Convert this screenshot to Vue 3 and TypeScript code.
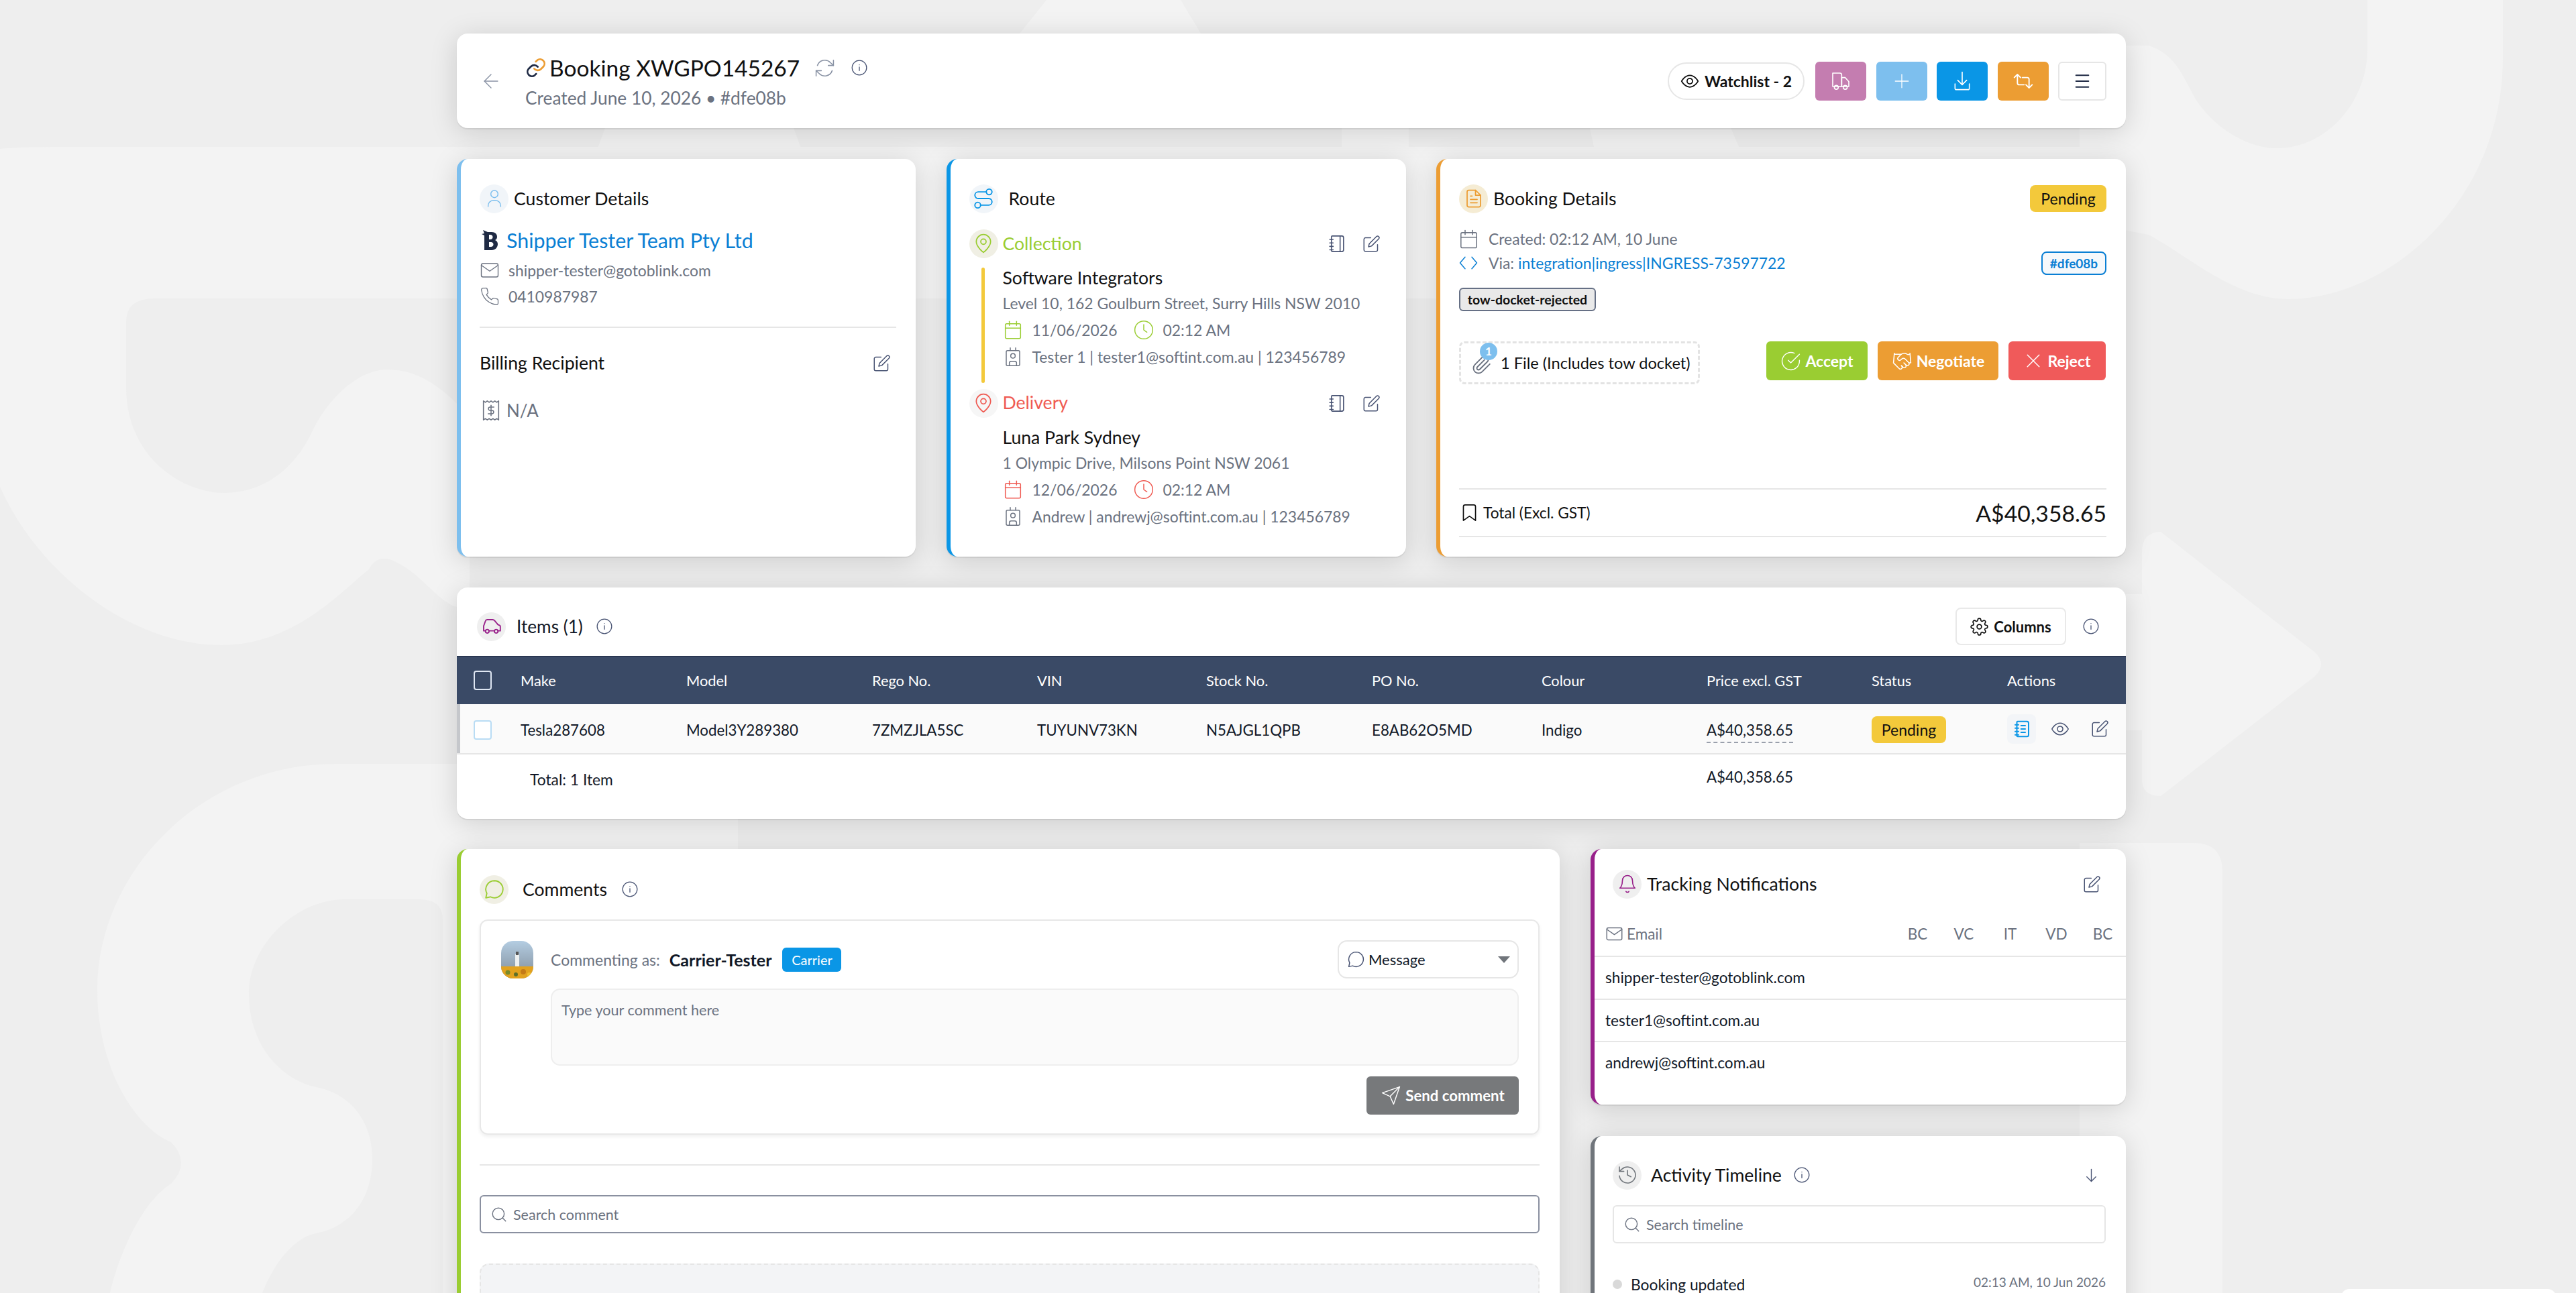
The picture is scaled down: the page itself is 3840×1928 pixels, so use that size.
<script setup lang="ts">
import { h } from 'vue'

const circle = (cx: number, cy: number, r: number) =>
  `M${cx - r} ${cy}a${r} ${r} 0 1 0 ${2 * r} 0a${r} ${r} 0 1 0 ${-2 * r} 0`

const notebookShape = ['M7 3h11a2 2 0 0 1 2 2v14a2 2 0 0 1-2 2H7a1 1 0 0 1-1-1V4a1 1 0 0 1 1-1z', 'M4 7h4', 'M4 11h4', 'M4 15h4', 'M4 19h4']

const icons: Record<string, string[]> = {
  back: ['M19 12H5', 'M12 19l-7-7 7-7'],
  refresh: ['M22 3v6h-6', 'M2 21v-6h6', 'M3.5 9a9 9 0 0 1 14.9-3.4L22 9', 'M2 15l3.6 3.4A9 9 0 0 0 20.5 15'],
  info: [circle(12, 12, 10), 'M12 16v-5', 'M12 8h.01'],
  eye: ['M1.5 12S5.5 4.5 12 4.5 22.5 12 22.5 12 18.5 19.5 12 19.5 1.5 12 1.5 12z', circle(12, 12, 3.5)],
  truck: ['M3 3h8a2 2 0 0 1 2 2v13H3z', 'M13 8h4l4 4.5V18h-8z', circle(7, 19, 2.2), circle(17, 19, 2.2)],
  plus: ['M12 3v18', 'M3 12h18'],
  download: ['M12 2v14', 'M7 11l5 5 5-5', 'M4 15v5a1.5 1.5 0 0 0 1.5 1.5h13A1.5 1.5 0 0 0 20 20v-5'],
  repeat: ['M2 8l3.5-3.5L9 8', 'M5.5 5v9a2 2 0 0 0 2 2H13', 'M22 16l-3.5 3.5L15 16', 'M18.5 19v-9a2 2 0 0 0-2-2H11'],
  menu: ['M5 5.5h14', 'M5 12h14', 'M5 18.5h14'],
  user: [circle(12, 7, 4), 'M5 21v-1a6 6 0 0 1 6-6h2a6 6 0 0 1 6 6v1'],
  route: ['M9 19h8.5a3.5 3.5 0 0 0 0-7h-11a3.5 3.5 0 0 1 0-7H15', circle(18, 5, 3), circle(6, 19, 3)],
  pin: ['M20 10c0 6-8 12-8 12s-8-6-8-12a8 8 0 0 1 16 0z', circle(12, 10, 3)],
  calendar: ['M5 5h14a1.5 1.5 0 0 1 1.5 1.5V20a1.5 1.5 0 0 1-1.5 1.5H5A1.5 1.5 0 0 1 3.5 20V6.5A1.5 1.5 0 0 1 5 5z', 'M8 2.5V7', 'M16 2.5V7', 'M3.5 10h17'],
  clock: [circle(12, 12, 10), 'M12 6v6l3.5 2.5'],
  contact: ['M6 5h12a1.5 1.5 0 0 1 1.5 1.5v14A1.5 1.5 0 0 1 18 22H6a1.5 1.5 0 0 1-1.5-1.5v-14A1.5 1.5 0 0 1 6 5z', 'M9 2v3', 'M15 2v3', circle(12, 11, 2.5), 'M8 22v-3a2 2 0 0 1 2-2h4a2 2 0 0 1 2 2v3'],
  notebook: [...notebookShape, 'M16 3v18'],
  notelines: [...notebookShape, 'M11 8h5', 'M11 12h5', 'M11 16h5'],
  edit: ['M11 4H4a2 2 0 0 0-2 2v14a2 2 0 0 0 2 2h14a2 2 0 0 0 2-2v-7', 'M18.5 2.5a2.12 2.12 0 0 1 3 3L12 15l-4 1 1-4 9.5-9.5z'],
  doc: ['M14 2H6a2 2 0 0 0-2 2v16a2 2 0 0 0 2 2h12a2 2 0 0 0 2-2V8z', 'M14 2v6h6', 'M8 13h8', 'M8 17h8', 'M8 9h2'],
  code: ['M8 5l-6 7 6 7', 'M16 5l6 7-6 7'],
  mail: ['M4 4h16a2 2 0 0 1 2 2v12a2 2 0 0 1-2 2H4a2 2 0 0 1-2-2V6a2 2 0 0 1 2-2z', 'M22 6l-10 7L2 6'],
  phone: ['M22 16.92v3a2 2 0 0 1-2.18 2 19.79 19.79 0 0 1-8.63-3.07 19.5 19.5 0 0 1-6-6 19.79 19.79 0 0 1-3.07-8.67A2 2 0 0 1 4.11 2h3a2 2 0 0 1 2 1.72 12.84 12.84 0 0 0 .7 2.81 2 2 0 0 1-.45 2.11L8.09 9.91a16 16 0 0 0 6 6l1.27-1.27a2 2 0 0 1 2.11-.45 12.84 12.84 0 0 0 2.81.7A2 2 0 0 1 22 16.92z'],
  receipt: ['M4 2v20l2-1.5 2 1.5 2-1.5 2 1.5 2-1.5 2 1.5 2-1.5 2 1.5V2l-2 1.5L16 2l-2 1.5L12 2l-2 1.5L8 2 6 3.5z', 'M15 8.5h-4a1.75 1.75 0 0 0 0 3.5h2a1.75 1.75 0 0 1 0 3.5H9', 'M12 6.5v11'],
  clip: ['M21.44 11.05l-9.19 9.19a6 6 0 0 1-8.49-8.49l9.19-9.19a4 4 0 0 1 5.66 5.66l-9.2 9.19a2 2 0 0 1-2.83-2.83l8.49-8.48'],
  check: ['M22 11.08V12a10 10 0 1 1-5.93-9.14', 'M22 4L12 14.01l-3-3'],
  handshake: ['M11 17l2 2a1 1 0 1 0 3-3', 'M14 14l2.5 2.5a1 1 0 1 0 3-3l-3.88-3.88a3 3 0 0 0-4.24 0l-.88.88a1 1 0 1 1-3-3l2.81-2.81a5.79 5.79 0 0 1 7.06-.87l.47.28a2 2 0 0 0 1.42.25L21 4', 'M21 3l1 11h-2', 'M3 3L2 14l6.5 6.5a1 1 0 1 0 3-3', 'M3 4h8'],
  x: ['M19 5L5 19', 'M5 5l14 14'],
  bookmark: ['M19 21l-7-5-7 5V5a2 2 0 0 1 2-2h10a2 2 0 0 1 2 2z'],
  car: ['M5 17H3v-5.5l2-5.5a2 2 0 0 1 1.9-1.5h6a3 3 0 0 1 2.3 1L19 10l2 1a1 1 0 0 1 .6 1v5H19', 'M9 17h6', circle(7, 17.5, 2), circle(17, 17.5, 2)],
  gear: ['M12 15a3 3 0 1 0 0-6 3 3 0 0 0 0 6z', 'M19.4 15a1.65 1.65 0 0 0 .33 1.82l.06.06a2 2 0 0 1 0 2.83 2 2 0 0 1-2.83 0l-.06-.06a1.65 1.65 0 0 0-1.82-.33 1.65 1.65 0 0 0-1 1.51V21a2 2 0 0 1-2 2 2 2 0 0 1-2-2v-.09A1.65 1.65 0 0 0 9 19.4a1.65 1.65 0 0 0-1.82.33l-.06.06a2 2 0 0 1-2.83 0 2 2 0 0 1 0-2.83l.06-.06a1.65 1.65 0 0 0 .33-1.82 1.65 1.65 0 0 0-1.51-1H3a2 2 0 0 1-2-2 2 2 0 0 1 2-2h.09A1.65 1.65 0 0 0 4.6 9a1.65 1.65 0 0 0-.33-1.82l-.06-.06a2 2 0 0 1 0-2.83 2 2 0 0 1 2.83 0l.06.06a1.65 1.65 0 0 0 1.82.33H9a1.65 1.65 0 0 0 1-1.51V3a2 2 0 0 1 2-2 2 2 0 0 1 2 2v.09a1.65 1.65 0 0 0 1 1.51 1.65 1.65 0 0 0 1.82-.33l.06-.06a2 2 0 0 1 2.83 0 2 2 0 0 1 0 2.83l-.06.06a1.65 1.65 0 0 0-.33 1.82V9a1.65 1.65 0 0 0 1.51 1H21a2 2 0 0 1 2 2 2 2 0 0 1-2 2h-.09a1.65 1.65 0 0 0-1.51 1z'],
  message: ['M12 3a9 9 0 1 1-4.2 16.96L3 21l1.04-4.8A9 9 0 0 1 12 3z'],
  send: ['M22 2L11 13', 'M22 2l-7 20-4-9-9-4z'],
  search: [circle(11, 11, 8), 'M21 21l-4.35-4.35'],
  bell: ['M18 8a6 6 0 0 0-12 0c0 7-3 9-3 9h18s-3-2-3-9', 'M13.73 21a2 2 0 0 1-3.46 0'],
  history: ['M3 3v5h5', 'M3.05 13A9 9 0 1 0 6 5.3L3 8', 'M12 7v5l4 2'],
  down: ['M12 4v16', 'M18 14l-6 6-6-6']
}

// small icon helper, all strokes follow currentColor
const Icon = (props: { name: string; size?: number; stroke?: number }) =>
  h(
    'svg',
    {
      class: 'ico',
      width: props.size ?? 26,
      height: props.size ?? 26,
      viewBox: '0 0 24 24',
      fill: 'none',
      stroke: 'currentColor',
      'stroke-width': props.stroke ?? 1.2,
      'stroke-linecap': 'round',
      'stroke-linejoin': 'round'
    },
    (icons[props.name] ?? []).map((d) => h('path', { d }))
  )
Icon.props = ['name', 'size', 'stroke']

interface Stop {
  kind: string
  label: string
  name: string
  address: string
  date: string
  time: string
  contact: string
  bar: boolean
}

const stops: Stop[] = [
  {
    kind: 'collection',
    label: 'Collection',
    name: 'Software Integrators',
    address: 'Level 10, 162 Goulburn Street, Surry Hills NSW 2010',
    date: '11/06/2026',
    time: '02:12 AM',
    contact: 'Tester 1 | tester1@softint.com.au | 123456789',
    bar: true
  },
  {
    kind: 'delivery',
    label: 'Delivery',
    name: 'Luna Park Sydney',
    address: '1 Olympic Drive, Milsons Point NSW 2061',
    date: '12/06/2026',
    time: '02:12 AM',
    contact: 'Andrew | andrewj@softint.com.au | 123456789',
    bar: false
  }
]

const columns = ['Make', 'Model', 'Rego No.', 'VIN', 'Stock No.', 'PO No.', 'Colour', 'Price excl. GST', 'Status', 'Actions']
const itemCells = ['Tesla287608', 'Model3Y289380', '7ZMZJLA5SC', 'TUYUNV73KN', 'N5AJGL1QPB', 'E8AB62O5MD', 'Indigo']
const notifyCols = ['BC', 'VC', 'IT', 'VD', 'BC']
const notifyEmails = ['shipper-tester@gotoblink.com', 'tester1@softint.com.au', 'andrewj@softint.com.au']
</script>

<template>
  <div class="page">
    <svg class="watermark" width="3840" height="1928" viewBox="0 0 3840 1928" aria-hidden="true">
      <path d="M0 222Q30 219 80 219H3100V445H230Q188 445 188 480V578C188 680 270 735 334 735C400 735 445 690 467 640C495 585 540 551 577 551C630 551 665 585 700 620V910L678 904C650 895 625 850 581 834C565 830 555 838 550 849C510 880 440 962 330 962C200 962 60 860 0 726Z" />
      <path d="M3731 0V86C3731 300 3560 446 3411 446C3330 446 3260 380 3203 350L3100 330V68H3203C3240 80 3250 105 3273 148C3300 190 3350 221 3394 221C3470 221 3529 150 3529 74V0Z" />
      <path d="M3100 886H3193V824Q3193 793 3221 793L3450 972Q3470 990 3450 1009L3221 1187Q3193 1187 3193 1162V1089H3100Z" />
      <path d="M3100 1257H3270Q3313 1257 3313 1300V1928H3100Z" />
      <path d="M700 1139H500C300 1139 145 1300 145 1476C145 1590 200 1680 255 1703Q285 1734 255 1765C215 1790 180 1860 164 1928H391C410 1880 440 1845 471 1839C520 1830 555 1790 555 1728C555 1670 520 1630 471 1621C420 1610 371 1560 371 1482C371 1410 440 1341 515 1341H625Q660 1341 660 1371V1928H1100V1139Z" />
      <path d="M902 191H1183L1200 237H885Z" />
      <path d="M1560 0H1760L1790 50H1520Z" />
      <path d="M2000 191H2100V237H2000Z" />
      <path d="M2370 191H2580L2600 237H2380Z" />
    </svg>

    <div class="toast-edge"></div>

    <main class="content">
      <!-- page header -->
      <header class="card top-card">
        <button class="ghost back" type="button"><Icon name="back" :size="34" :stroke="1" /></button>
        <div class="top-info">
          <div class="top-title">
            <svg class="link-mark" width="32" height="32" viewBox="0 0 24 24" fill="none" stroke-width="2" stroke-linecap="round">
              <path stroke="#ec9d33" d="M10 13a5 5 0 0 0 7.5.5l3-3a5 5 0 0 0-7-7L11.7 5.2" />
              <path stroke="#1f2a44" d="M14 11a5 5 0 0 0-7.5-.5l-3 3a5 5 0 0 0 7 7l1.7-1.7" />
            </svg>
            <h1>Booking XWGPO145267</h1>
            <Icon class="refresh" name="refresh" :size="31" :stroke="1.2" />
            <Icon class="info-ico" name="info" :size="26" />
          </div>
          <p class="top-sub">Created June 10, 2026 • #dfe08b</p>
        </div>
        <div class="top-actions">
          <button class="watch" type="button"><Icon name="eye" :size="28" :stroke="1.5" />Watchlist - 2</button>
          <button class="square purple" type="button"><Icon name="truck" :size="32" :stroke="1.2" /></button>
          <button class="square sky" type="button"><Icon name="plus" :size="26" :stroke="1.2" /></button>
          <button class="square blue" type="button"><Icon name="download" :size="32" :stroke="1.2" /></button>
          <button class="square orange" type="button"><Icon name="repeat" :size="32" :stroke="1.4" /></button>
          <button class="square plain" type="button"><Icon name="menu" :size="32" :stroke="1.5" /></button>
        </div>
      </header>

      <section class="details-row">
        <!-- customer -->
        <article class="card side sky-side customer">
          <div class="card-head">
            <span class="badge-ico sky-ico"><Icon name="user" :size="32" :stroke="1.1" /></span>
            <h2 class="head-tight">Customer Details</h2>
          </div>
          <div class="company">
            <svg width="24" height="30" viewBox="0 0 24 30"><path fill="#1f2a44" d="M2 0l7 3H15c5 0 8 3 8 7 0 2.5-1 4-3 5 2.5 1 4 3 4 6 0 5-4 9-9 9H4V8L0 6l4-1zM11 7v7h2c2 0 3.5-1.5 3.5-3.5S15 7 13 7zM11 18v7h3c2 0 3.5-1.5 3.5-3.5S16 18 14 18z" /></svg>
            <a class="company-link">Shipper Tester Team Pty Ltd</a>
          </div>
          <div class="meta meta-mail"><Icon name="mail" :size="30" :stroke="1.1" />shipper-tester@gotoblink.com</div>
          <div class="meta meta-phone"><Icon name="phone" :size="30" :stroke="1" />0410987987</div>
          <hr class="rule" />
          <div class="billing">
            <h3>Billing Recipient</h3>
            <Icon class="edit-ico" name="edit" :size="27" :stroke="1.3" />
          </div>
          <div class="billing-value"><Icon name="receipt" :size="34" :stroke="1.1" />N/A</div>
        </article>

        <!-- route -->
        <article class="card side blue-side route">
          <div class="card-head">
            <span class="badge-ico sky-ico blue-ink"><Icon name="route" :size="34" :stroke="1.3" /></span>
            <h2 class="head-route">Route</h2>
          </div>
          <div v-for="stop in stops" :key="stop.kind" :class="['stop', stop.kind]">
            <div class="stop-head">
              <span class="stop-pin"><Icon name="pin" :size="32" :stroke="1.3" /></span>
              <span class="stop-label">{{ stop.label }}</span>
              <Icon class="edit-ico notebook" name="notebook" :size="31" :stroke="1.2" />
              <Icon class="edit-ico" name="edit" :size="27" :stroke="1.3" />
            </div>
            <div class="stop-body">
              <span :class="['stop-bar', { on: stop.bar }]"></span>
              <div class="stop-info">
                <div class="stop-name">{{ stop.name }}</div>
                <div class="stop-line">{{ stop.address }}</div>
                <div class="stop-line date-line">
                  <span class="cell stop-ink"><Icon name="calendar" :size="32" :stroke="1.1" /></span>
                  <span class="date-text">{{ stop.date }}</span>
                  <span class="cell stop-ink"><Icon name="clock" :size="32" :stroke="1.1" /></span>
                  <span>{{ stop.time }}</span>
                </div>
                <div class="stop-line date-line">
                  <span class="cell"><Icon name="contact" :size="32" :stroke="1.1" /></span>
                  <span>{{ stop.contact }}</span>
                </div>
              </div>
            </div>
          </div>
        </article>

        <!-- booking -->
        <article class="card side orange-side booking">
          <div class="card-head">
            <span class="badge-ico cream-ico"><Icon name="doc" :size="30" :stroke="1.4" /></span>
            <h2 class="head-tight">Booking Details</h2>
            <span class="status-pill big">Pending</span>
          </div>
          <div class="booking-line created">
            <span class="cell-b"><Icon name="calendar" :size="33" :stroke="1.1" /></span>
            Created: 02:12 AM, 10 June
          </div>
          <div class="booking-line via">
            <span class="cell-b code-ink"><Icon name="code" :size="30" :stroke="1.2" /></span>
            Via:&nbsp;<a class="via-link">integration|ingress|INGRESS-73597722</a>
            <span class="hash">#dfe08b</span>
          </div>
          <span class="tag">tow-docket-rejected</span>
          <div class="booking-actions">
            <div class="files">
              <span class="file-count">1</span>
              <Icon class="clip" name="clip" :size="30" :stroke="1.5" />
              1 File (Includes tow docket)
            </div>
            <button class="act green" type="button"><Icon name="check" :size="31" :stroke="1.1" />Accept</button>
            <button class="act amber" type="button"><Icon name="handshake" :size="31" :stroke="1.2" />Negotiate</button>
            <button class="act red" type="button"><Icon name="x" :size="30" :stroke="1.2" />Reject</button>
          </div>
          <div class="total">
            <Icon name="bookmark" :size="31" :stroke="1.3" />
            <span class="total-label">Total (Excl. GST)</span>
            <span class="total-value">A$40,358.65</span>
          </div>
        </article>
      </section>

      <!-- items -->
      <section class="card items">
        <div class="items-head">
          <span class="badge-ico grey-ico purple-ink"><Icon name="car" :size="32" :stroke="1.4" /></span>
          <h2 class="head-items">Items (1)</h2>
          <Icon class="info-ico" name="info" :size="26" />
          <button class="columns-btn" type="button"><Icon name="gear" :size="27" :stroke="1.5" />Columns</button>
          <Icon class="info-ico" name="info" :size="26" />
        </div>
        <div class="grid-row grid-head">
          <span class="box head-box"></span>
          <span v-for="col in columns" :key="col">{{ col }}</span>
        </div>
        <div class="grid-row grid-item">
          <span class="box"></span>
          <span v-for="cell in itemCells" :key="cell">{{ cell }}</span>
          <span><span class="dashed">A$40,358.65</span></span>
          <span><span class="status-pill">Pending</span></span>
          <span class="row-actions">
            <span class="row-note"><Icon name="notelines" :size="30" :stroke="1.6" /></span>
            <Icon class="edit-ico" name="eye" :size="28" :stroke="1.3" />
            <Icon class="edit-ico last-action" name="edit" :size="27" :stroke="1.3" />
          </span>
        </div>
        <div class="grid-row grid-total">
          <span class="total-items">Total: 1 Item</span>
          <span class="total-price">A$40,358.65</span>
        </div>
      </section>

      <section class="bottom-row">
        <!-- comments -->
        <article class="card side green-side comments">
          <div class="card-head">
            <span class="badge-ico cream-ico green-ink"><Icon name="message" :size="34" :stroke="1.3" /></span>
            <h2 class="head-comments">Comments</h2>
            <Icon class="info-ico" name="info" :size="26" />
          </div>
          <div class="composer">
            <div class="composer-top">
              <svg class="avatar" width="48" height="56" viewBox="0 0 48 56">
                <defs>
                  <linearGradient id="sky" x1="0" y1="0" x2="0" y2="1">
                    <stop offset="0" stop-color="#b4cde2" />
                    <stop offset="1" stop-color="#7f8c99" />
                  </linearGradient>
                </defs>
                <rect width="48" height="56" fill="url(#sky)" />
                <rect x="21" y="20" width="6" height="18" fill="#eef0f0" />
                <rect x="22" y="16" width="4" height="5" fill="#555" />
                <rect y="38" width="48" height="18" fill="#e2a21f" />
                <circle cx="10" cy="47" r="3.5" fill="#7a8a2a" />
                <circle cx="22" cy="50" r="3" fill="#5d6f2a" />
                <circle cx="33" cy="46" r="4" fill="#c47a16" />
                <circle cx="42" cy="50" r="3" fill="#f0c030" />
              </svg>
              <span class="as-label">Commenting as:</span>
              <strong class="as-name">Carrier-Tester</strong>
              <span class="as-role">Carrier</span>
              <div class="msg-select">
                <Icon name="message" :size="29" :stroke="1.2" />
                <span>Message</span>
                <i class="caret"></i>
              </div>
            </div>
            <div class="fake-textarea">Type your comment here</div>
            <button class="send" type="button"><Icon name="send" :size="31" :stroke="1.1" />Send comment</button>
          </div>
          <hr class="rule comment-rule" />
          <div class="search dark-border"><Icon name="search" :size="26" :stroke="1.3" />Search comment</div>
          <div class="empty-comments"></div>
        </article>

        <div class="bottom-side">
          <!-- notifications -->
          <article class="card side purple-side tracking">
            <div class="card-head">
              <span class="badge-ico grey-ico purple-ink"><Icon name="bell" :size="30" :stroke="1.3" /></span>
              <h2 class="head-tight">Tracking Notifications</h2>
              <Icon class="edit-ico push" name="edit" :size="27" :stroke="1.3" />
            </div>
            <div class="notify-head">
              <Icon name="mail" :size="27" :stroke="1.3" />
              <span class="notify-email">Email</span>
              <span v-for="(col, i) in notifyCols" :key="i" class="notify-col">{{ col }}</span>
            </div>
            <div v-for="mail in notifyEmails" :key="mail" class="notify-row">{{ mail }}</div>
          </article>

          <!-- timeline -->
          <article class="card side grey-side activity">
            <div class="card-head">
              <span class="badge-ico grey-ico"><Icon name="history" :size="32" :stroke="1.2" /></span>
              <h2 class="head-activity">Activity Timeline</h2>
              <Icon class="info-ico" name="info" :size="26" />
              <Icon class="edit-ico push" name="down" :size="27" :stroke="1.2" />
            </div>
            <div class="search light-border"><Icon name="search" :size="26" :stroke="1.3" />Search timeline</div>
            <div class="timeline-row">
              <i class="dot"></i>
              <span class="tl-title">Booking updated</span>
              <span class="tl-time">02:13 AM, 10 Jun 2026</span>
            </div>
          </article>
        </div>
      </section>
    </main>
  </div>
</template>

<style>
html,
body {
  margin: 0;
  padding: 0;
  background: #eeeeee;
}

/* plain rule: the icon helper's svg has to keep its size inside flex rows */
svg.ico {
  flex: none;
}
</style>

<style scoped>
* {
  box-sizing: border-box;
}

.page {
  position: relative;
  width: 3840px;
  height: 1928px;
  overflow: hidden;
  background: #eeeeee;
  font-family: Lato, "Liberation Sans", sans-serif;
  color: #111827;
}

.watermark {
  position: absolute;
  top: 0;
  left: 0;
  fill: #f3f3f3;
}

.toast-edge {
  position: absolute;
  left: 3490px;
  top: 1922px;
  width: 320px;
  height: 40px;
  background: #fff;
  border-radius: 12px;
}

.content {
  position: relative;
  width: 2488px;
  margin-left: 681px;
  padding-top: 50px;
  display: flex;
  flex-direction: column;
}

.card {
  background: #fff;
  border-radius: 16px;
  box-shadow: 0 2px 1px rgba(0, 0, 0, 0.07), 0 6px 40px rgba(0, 0, 0, 0.15);
}

.side {
  border-left: 6px solid #ccc;
}
.sky-side { border-left-color: #7dbfee; }
.blue-side { border-left-color: #0a96e6; }
.orange-side { border-left-color: #ec9d33; }
.green-side { border-left-color: #9acd32; }
.purple-side { border-left-color: #98208a; }
.grey-side { border-left-color: #70757b; }

h1,
h2,
h3,
p {
  margin: 0;
  font-weight: 400;
}

button {
  font-family: inherit;
  border: 0;
  cursor: pointer;
}

/* header */
.top-card {
  height: 141px;
  display: flex;
  align-items: center;
  padding: 0 29px 0 34px;
}

.ghost {
  background: none;
  padding: 0;
  color: #8a93a5;
  display: flex;
}

.top-info {
  margin-left: 34px;
  margin-top: 4px;
}

.top-title {
  display: flex;
  align-items: center;
  height: 38px;
}

.top-title h1 {
  font-size: 33.5px;
  line-height: 38px;
  margin-left: 4px;
  color: #111;
}

.refresh {
  color: #8a93a5;
  margin-left: 22px;
}

.info-ico {
  color: #475272;
  flex: none;
}

.top-title .info-ico {
  margin-left: 23px;
}

.top-sub {
  margin-top: 9px;
  font-size: 26.3px;
  line-height: 34px;
  color: #6b7280;
}

.top-actions {
  margin-left: auto;
  display: flex;
  align-items: center;
  gap: 14.4px;
}

.watch {
  width: 204px;
  height: 56px;
  margin-right: 2px;
  border-radius: 28px;
  background: #fff;
  border: 2px solid #e6e6e6;
  display: flex;
  align-items: center;
  justify-content: center;
  gap: 8px;
  font-size: 23px;
  font-weight: 700;
  color: #111;
}

.square {
  width: 76px;
  height: 58px;
  border-radius: 6px;
  color: #fff;
  display: flex;
  align-items: center;
  justify-content: center;
  padding: 0;
}
.purple { background: #c47db0; }
.sky { background: #7dbfee; }
.blue { background: #0a96e6; }
.orange { background: #ec9d33; }
.plain {
  width: 72px;
  background: #fff;
  border: 2px solid #e6e6e6;
  color: #1f2a44;
}

/* shared card head */
.details-row {
  margin-top: 46px;
  display: grid;
  grid-template-columns: 684px 685px 1028px;
  grid-template-rows: 593px;
  justify-content: space-between;
}

.card-head {
  display: flex;
  align-items: center;
  height: 44px;
}

.card-head h2 {
  font-size: 26.6px;
  line-height: 32px;
  color: #111;
}

.head-tight { margin-left: 8px; }
.head-route { margin-left: 16px; }
.head-items { margin-left: 16px; }
.head-comments { margin-left: 21px; margin-right: 21px; }
.head-activity { margin-left: 14px; margin-right: 17px; }

.badge-ico {
  width: 43px;
  height: 43px;
  border-radius: 50%;
  display: flex;
  align-items: center;
  justify-content: center;
  flex: none;
  color: #70757b;
}
.sky-ico { background: #f1f5f9; color: #7dbfee; }
.blue-ink { color: #0a96e6; }
.cream-ico { background: #f5ecd4; color: #ec9d33; }
.grey-ico { background: #efefef; }
.purple-ink { color: #98208a; }
.green-ink { background: #f0efe4; color: #9acd32; }

.edit-ico {
  color: #475272;
  flex: none;
}

.push {
  margin-left: auto;
}

/* customer */
.customer {
  padding: 37px 29px 0 28px;
}

.company {
  margin-top: 22px;
  display: flex;
  align-items: center;
  gap: 13px;
  height: 36px;
  padding-left: 3px;
}

.company-link {
  font-size: 30.4px;
  line-height: 36px;
  color: #0a7fd4;
}

.meta {
  display: flex;
  align-items: center;
  gap: 13px;
  height: 32px;
  font-size: 22.9px;
  color: #6b7280;
}
.meta-mail { margin-top: 11px; }
.meta-phone { margin-top: 7px; }

.rule {
  border: 0;
  height: 2px;
  background: #e6e6e6;
  margin: 29px 0 0;
}

.billing {
  margin-top: 34px;
  display: flex;
  align-items: center;
  justify-content: space-between;
  height: 36px;
  padding-right: 8px;
}

.billing h3 {
  font-size: 26.6px;
  line-height: 36px;
  color: #111;
}

.billing-value {
  margin-top: 35px;
  height: 36px;
  display: flex;
  align-items: center;
  gap: 6px;
  font-size: 26px;
  color: #6b7280;
}

/* route */
.route {
  padding: 37px 38px 0 28px;
}

.stop-head {
  height: 44px;
  display: flex;
  align-items: center;
  color: #9acd32;
}

.collection .stop-head {
  margin-top: 23px;
}

.delivery .stop-head {
  margin-top: 8px;
}

.stop-pin {
  width: 43px;
  height: 43px;
  border-radius: 50%;
  background: #f0efe4;
  display: flex;
  align-items: center;
  justify-content: center;
}

.delivery .stop-pin {
  background: #f6f6f6;
}

.delivery .stop-head,
.delivery .stop-ink {
  color: #ef5a52;
}

.collection .stop-ink {
  color: #9acd32;
}

.stop-label {
  margin-left: 7px;
  margin-right: auto;
  font-size: 26.6px;
}

.delivery .stop-label {
  margin-top: -3px;
}

.notebook {
  margin-right: 23px;
}

.stop-body {
  margin-top: 14px;
  display: flex;
}

.collection .stop-body {
  height: 172px;
}

.stop-bar {
  width: 5px;
  margin-left: 18px;
  border-radius: 3px;
}

.stop-bar.on {
  background: #f3c93b;
}

.stop-info {
  margin-left: 27px;
  margin-top: -2px;
}

.stop-name {
  font-size: 26.6px;
  line-height: 34px;
  color: #111;
}

.stop-line {
  margin-top: 3px;
  height: 36px;
  line-height: 36px;
  font-size: 22.9px;
  color: #6b7280;
  white-space: nowrap;
}

.date-line {
  margin-top: 4px;
  display: flex;
  align-items: center;
}

.cell {
  width: 34px;
  margin: 0 12px 0 -2px;
  display: flex;
  justify-content: center;
  color: #6b7280;
  flex: none;
}

.date-text {
  width: 151px;
}

/* booking */
.booking {
  padding: 37px 29px 29px 28px;
  display: flex;
  flex-direction: column;
}

.status-pill {
  display: inline-flex;
  align-items: center;
  justify-content: center;
  width: 111px;
  height: 40px;
  background: #f3c93b;
  border-radius: 8px;
  font-size: 23px;
  color: #111;
}

.status-pill.big {
  width: 114px;
  margin-left: auto;
}

.booking-line {
  display: flex;
  align-items: center;
  font-size: 22.9px;
  color: #6b7280;
  white-space: nowrap;
}

.created {
  margin-top: 21px;
  height: 34px;
}

.via {
  margin-top: 1px;
  height: 36px;
}

.cell-b {
  width: 34px;
  margin: 0 13px 0 -3px;
  display: flex;
  justify-content: center;
}

.code-ink {
  color: #0a7fd4;
}

.via-link {
  color: #0a7fd4;
}

.hash {
  margin-left: auto;
  width: 97px;
  height: 35px;
  border: 2px solid #0a7fd4;
  border-radius: 8px;
  background: #f5f8fb;
  color: #0a7fd4;
  font-size: 19px;
  font-weight: 700;
  display: flex;
  align-items: center;
  justify-content: center;
}

.tag {
  margin-top: 19px;
  align-self: flex-start;
  width: 204px;
  height: 35px;
  line-height: 31px;
  text-align: center;
  border: 2px solid #667085;
  border-radius: 6px;
  background: #e9e9e9;
  font-size: 19.5px;
  font-weight: 700;
  color: #111;
}

.booking-actions {
  margin-top: 45px;
  display: flex;
  align-items: flex-start;
}

.files {
  position: relative;
  width: 359px;
  height: 64px;
  border: 3px dashed #e3e3e3;
  border-radius: 8px;
  display: flex;
  align-items: center;
  padding-left: 59px;
  font-size: 23.6px;
  color: #111;
  margin-right: 99px;
}

.clip {
  position: absolute;
  left: 16px;
  top: 17px;
  color: #6b7280;
}

.file-count {
  position: absolute;
  left: 28px;
  top: -1px;
  width: 26px;
  height: 26px;
  z-index: 1;
  border-radius: 50%;
  background: #7dbfee;
  color: #fff;
  font-size: 17px;
  font-weight: 700;
  text-align: center;
  line-height: 26px;
}

.act {
  height: 58px;
  border-radius: 6px;
  color: #fff;
  font-size: 23px;
  font-weight: 700;
  display: flex;
  align-items: center;
  justify-content: center;
  gap: 6px;
  padding: 0;
  margin-right: 15px;
}
.green { width: 151px; background: #9acd32; }
.amber { width: 180px; background: #ec9d33; }
.red { width: 145px; background: #f05a5a; margin-right: 0; }

.total {
  margin-top: auto;
  height: 73px;
  border-top: 2px solid #e6e6e6;
  border-bottom: 2px solid #e6e6e6;
  display: flex;
  align-items: center;
  color: #111;
}

.total-label {
  margin-left: 5px;
  font-size: 22.7px;
}

.total-value {
  margin-left: auto;
  font-size: 33.7px;
}

/* items */
.items {
  margin-top: 46px;
  height: 345px;
  overflow: hidden;
}

.items-head {
  height: 102px;
  padding: 30px 39px 16px 30px;
  display: flex;
  align-items: center;
}

.items-head .info-ico {
  margin-left: 19px;
}

.columns-btn {
  margin-left: auto;
  width: 165px;
  height: 56px;
  border: 2px solid #e9e9e9;
  border-radius: 8px;
  background: #fff;
  display: flex;
  align-items: center;
  justify-content: center;
  gap: 8px;
  font-size: 22px;
  font-weight: 700;
  color: #111;
}

.items-head .columns-btn + .info-ico {
  margin-left: 24px;
}

.head-items {
  font-size: 26.2px;
  line-height: 32px;
}

.grid-row {
  display: grid;
  grid-template-columns: 95px 247px 277px 246px 252px 247px 253px 246px 246px 202px 177px;
  align-items: center;
  font-size: 22.3px;
  color: #111827;
}

.grid-head {
  height: 72px;
  background: #3a4a66;
  color: #fff;
  border-top: 1px solid #1f2a44;
  font-size: 21.8px;
}

.box {
  width: 27px;
  height: 29px;
  margin-left: 25px;
  border-radius: 4px;
  border: 2px solid #b9dcf4;
  background: #fff;
}

.head-box {
  background: transparent;
  border-color: #dfe7f3;
}

.grid-item {
  height: 75px;
  padding-top: 3px;
  background: #fafafa;
  border-bottom: 2px solid #e6e6e6;
  box-shadow: inset 5px 0 #c5c7cb;
}

.dashed {
  padding-bottom: 4px;
  border-bottom: 2px dashed #9aa0ac;
}

.row-actions {
  display: flex;
  align-items: center;
  gap: 22px;
  margin-top: -3px;
}

.row-note {
  width: 43px;
  height: 44px;
  border-radius: 8px;
  background: #f3f5f8;
  color: #0a96e6;
  display: flex;
  align-items: center;
  justify-content: center;
}

.last-action {
  margin-left: 10px;
}

.grid-total {
  height: 78px;
}

.total-items {
  grid-column: 1 / span 2;
  margin-left: 109px;
  margin-top: -4px;
  font-size: 22.8px;
}

.total-price {
  grid-column: 9;
  margin-top: -12px;
}

/* comments */
.bottom-row {
  margin-top: 45px;
  display: flex;
  justify-content: space-between;
}

.comments {
  width: 1644px;
  height: 800px;
  padding: 38px 30px 0 28px;
}

.composer {
  margin-top: 23px;
  height: 321px;
  border: 2px solid #e8e8e8;
  border-radius: 12px;
  box-shadow: 0 3px 5px rgba(0, 0, 0, 0.06);
  padding: 29px 29px 0 30px;
  display: flex;
  flex-direction: column;
}

.composer-top {
  height: 57px;
  display: flex;
  align-items: center;
}

.avatar {
  border-radius: 18px;
  flex: none;
}

.as-label {
  margin-left: 26px;
  font-size: 23px;
  color: #6b7280;
}

.as-name {
  margin-left: 14px;
  font-size: 25px;
  color: #111827;
}

.as-role {
  margin-left: 16px;
  width: 88px;
  height: 36px;
  border-radius: 6px;
  background: #0a96e6;
  color: #fff;
  font-size: 20px;
  text-align: center;
  line-height: 36px;
}

.msg-select {
  margin-left: auto;
  width: 270px;
  height: 57px;
  border: 2px solid #e6e6e6;
  border-radius: 14px;
  display: flex;
  align-items: center;
  gap: 4px;
  padding: 0 11px;
  font-size: 22px;
  color: #111827;
}

.msg-select svg {
  color: #475272;
}

.caret {
  margin-left: auto;
  width: 0;
  height: 0;
  border-left: 9px solid transparent;
  border-right: 9px solid transparent;
  border-top: 10px solid #70757b;
}

.fake-textarea {
  margin: 15px 0 0 74px;
  height: 115px;
  background: #fafafa;
  border: 2px solid #eeeeee;
  border-radius: 14px;
  padding: 16px 10px 0 14px;
  line-height: 28px;
  font-size: 21.6px;
  color: #6b7280;
}

.send {
  margin-top: 16px;
  align-self: flex-end;
  width: 227px;
  height: 57px;
  border-radius: 6px;
  background: #77797b;
  color: #fff;
  font-size: 22.2px;
  font-weight: 700;
  display: flex;
  align-items: center;
  justify-content: center;
  gap: 6px;
}

.comment-rule {
  margin-top: 44px;
}

.search {
  height: 57px;
  border-radius: 6px;
  display: flex;
  align-items: center;
  gap: 8px;
  padding-left: 14px;
  font-size: 21.5px;
  color: #6b7280;
  background: #fff;
}

.dark-border {
  margin-top: 44px;
  border: 2px solid #8a90a0;
}

.light-border {
  margin-top: 23px;
  border: 2px solid #e6e6e6;
}

.empty-comments {
  margin-top: 45px;
  height: 200px;
  background: #f3f4f6;
  border: 2px dashed #e6e6e6;
  border-radius: 14px;
}

/* right column */
.bottom-side {
  width: 798px;
  display: flex;
  flex-direction: column;
  gap: 47px;
}

.tracking {
  height: 381px;
}

.tracking .card-head {
  margin-top: 30px;
  padding: 0 37px 0 27px;
}

.notify-head {
  height: 87px;
  padding: 34px 0 15px 16px;
  display: flex;
  align-items: center;
  border-bottom: 2px solid #e6e6e6;
  color: #6b7280;
  font-size: 22.5px;
}

.notify-email {
  margin-left: 5px;
  margin-right: auto;
}

.notify-col {
  width: 69px;
  text-align: center;
}

.notify-row {
  height: 63.5px;
  line-height: 62px;
  padding-left: 16px;
  border-bottom: 2px solid #e6e6e6;
  font-size: 22.6px;
  color: #111827;
}

.notify-row:last-child {
  border-bottom: 0;
}

.activity {
  height: 400px;
  padding: 36px 30px 0 27px;
}

.activity .card-head {
  padding-right: 8px;
}

.timeline-row {
  margin-top: 43px;
  height: 36px;
  display: flex;
  align-items: center;
}

.dot {
  width: 14px;
  height: 14px;
  border-radius: 50%;
  background: #d9d9d9;
}

.tl-title {
  margin-left: 13px;
  font-size: 22.8px;
  color: #111827;
}

.tl-time {
  margin-left: auto;
  margin-top: -8px;
  font-size: 19px;
  color: #6b7280;
}
</style>
